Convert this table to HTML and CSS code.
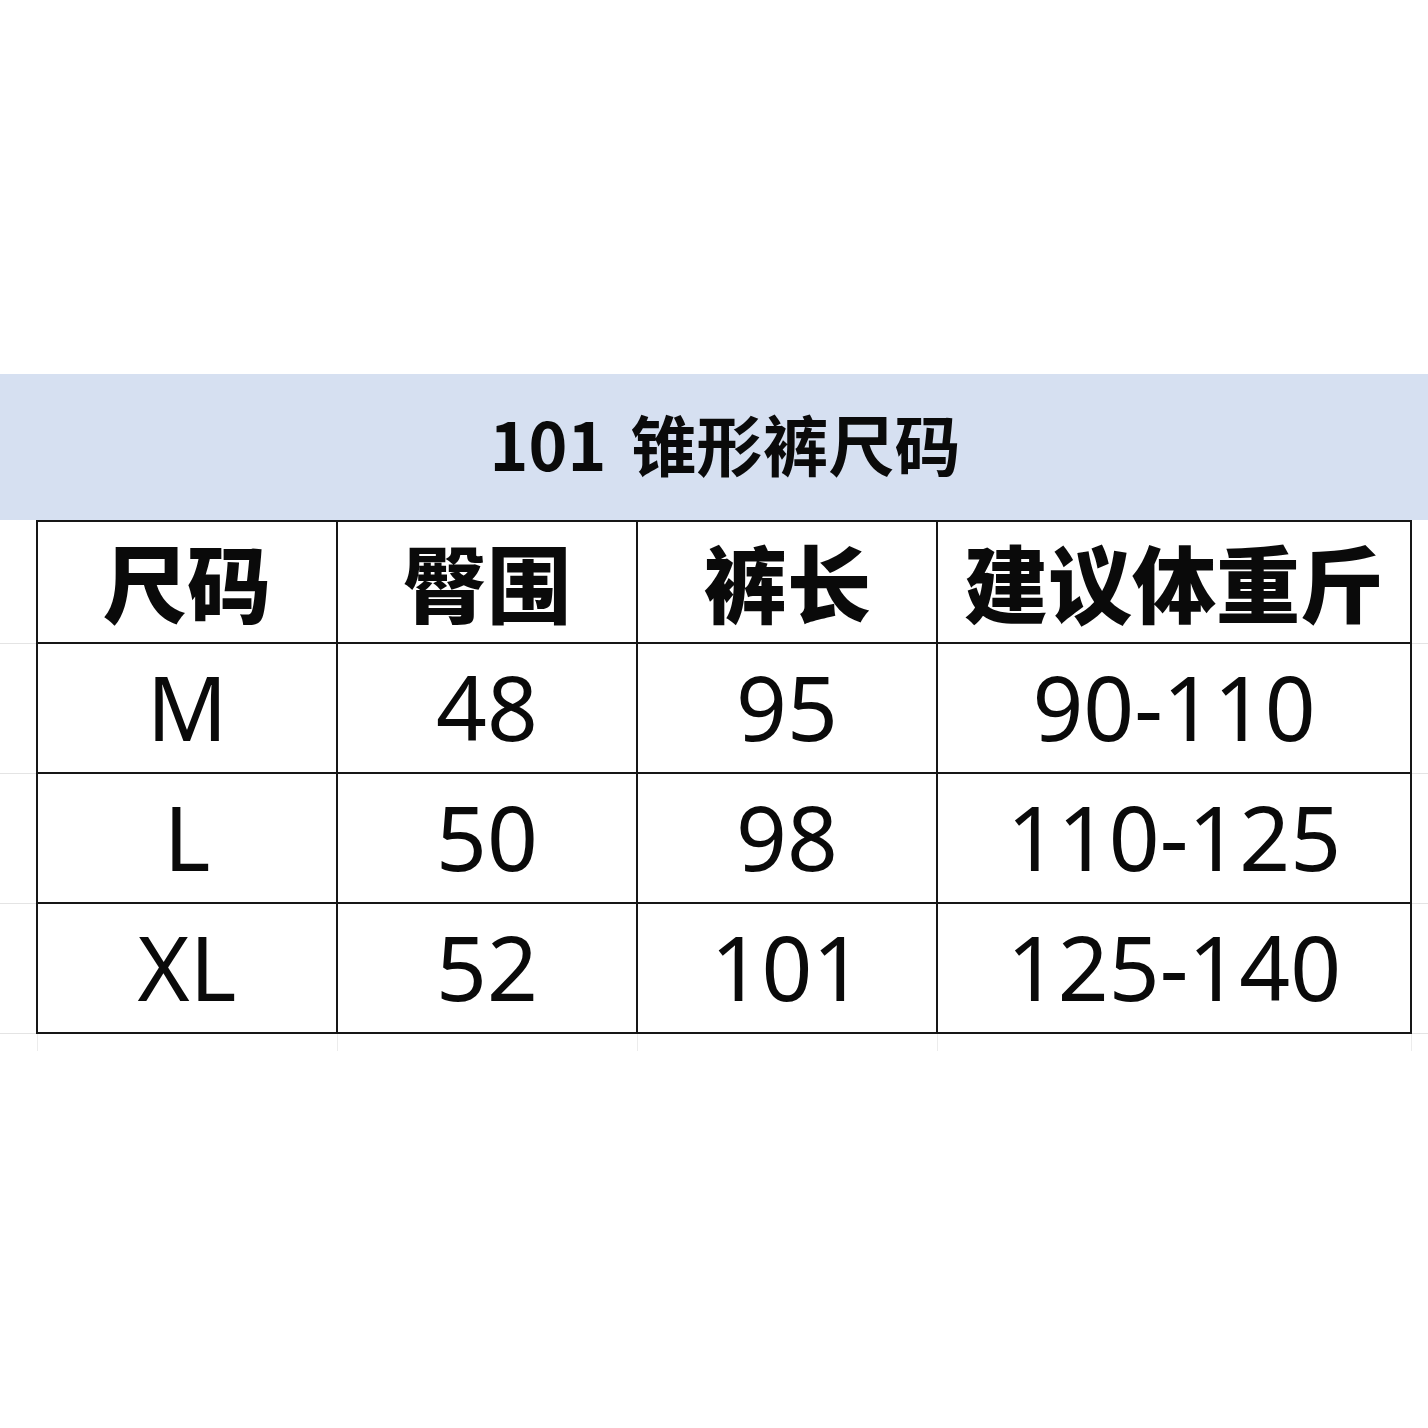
FILE: index.html
```html
<!DOCTYPE html>
<html lang="zh-CN">
<head>
<meta charset="utf-8">
<title>101 锥形裤尺码</title>
<link rel="stylesheet" href="styles.css">
</head>
<body>
<div class="page">
  <div class="band"><h1 class="title"><span class="num">101</span>锥形裤尺码</h1></div>
  <table class="sheet">
    <colgroup>
      <col class="c-stub-l"><col class="c-std"><col class="c-std"><col class="c-std"><col class="c-wide"><col class="c-stub-r">
    </colgroup>
    <tr class="head">
      <td class="stub"></td><th>尺码</th><th>臀围</th><th>裤长</th><th>建议体重斤</th><td class="stub"></td>
    </tr>
    <tr class="row">
      <td class="stub"></td><td>M</td><td>48</td><td>95</td><td>90-110</td><td class="stub"></td>
    </tr>
    <tr class="row">
      <td class="stub"></td><td>L</td><td>50</td><td>98</td><td>110-125</td><td class="stub"></td>
    </tr>
    <tr class="row">
      <td class="stub"></td><td>XL</td><td>52</td><td>101</td><td>125-140</td><td class="stub"></td>
    </tr>
    <tr class="tail">
      <td class="blank"></td><td class="ghost"></td><td class="ghost"></td><td class="ghost"></td><td class="ghost"></td><td class="blank"></td>
    </tr>
  </table>
</div>
</body>
</html>
```
FILE: styles.css
```css
html, body {
  margin: 0;
  padding: 0;
  background: #ffffff;
}
.page {
  width: 1428px;
  padding-top: 374px;
}
.band {
  height: 146px;
  background: #d6e0f1;
  display: flex;
  align-items: center;
  justify-content: center;
}
.title {
  margin: 0 0 10px 22px;
  font-family: "Noto Sans CJK SC", "Noto Sans", sans-serif;
  font-weight: 700;
  font-size: 66px;
  line-height: 1;
  color: #0a0a0a;
  letter-spacing: 0;
}
.num {
  margin-right: 24px;
}
.sheet {
  border-collapse: collapse;
  table-layout: fixed;
  width: 1428px;
}
.c-stub-l { width: 37px; }
.c-std { width: 300px; }
.c-wide { width: 474px; }
.c-stub-r { width: 17px; }
.sheet th, .sheet td {
  padding: 0;
  text-align: center;
  vertical-align: middle;
  border: 2px solid #161616;
  color: #0a0a0a;
}
.sheet th {
  font-family: "Noto Sans CJK SC", sans-serif;
  font-weight: 900;
  font-size: 84px;
  line-height: 1;
  padding-bottom: 2px;
}
.sheet .row td {
  font-family: "Noto Sans", "Noto Sans CJK SC", sans-serif;
  font-weight: 400;
  font-size: 89px;
  line-height: 1;
  padding-bottom: 4px;
}
.sheet td.stub {
  border-top: none;
  border-left: none;
  border-right: none;
  border-bottom: 1px solid #e4e4e4;
}
.head { height: 122px; }
.row { height: 130px; }
.tail { height: 18px; }
.sheet td.blank {
  border: none;
}
.sheet td.ghost {
  border-top: none;
  border-bottom: none;
  border-left: 1px solid #ececec;
  border-right: 1px solid #ececec;
}
```
